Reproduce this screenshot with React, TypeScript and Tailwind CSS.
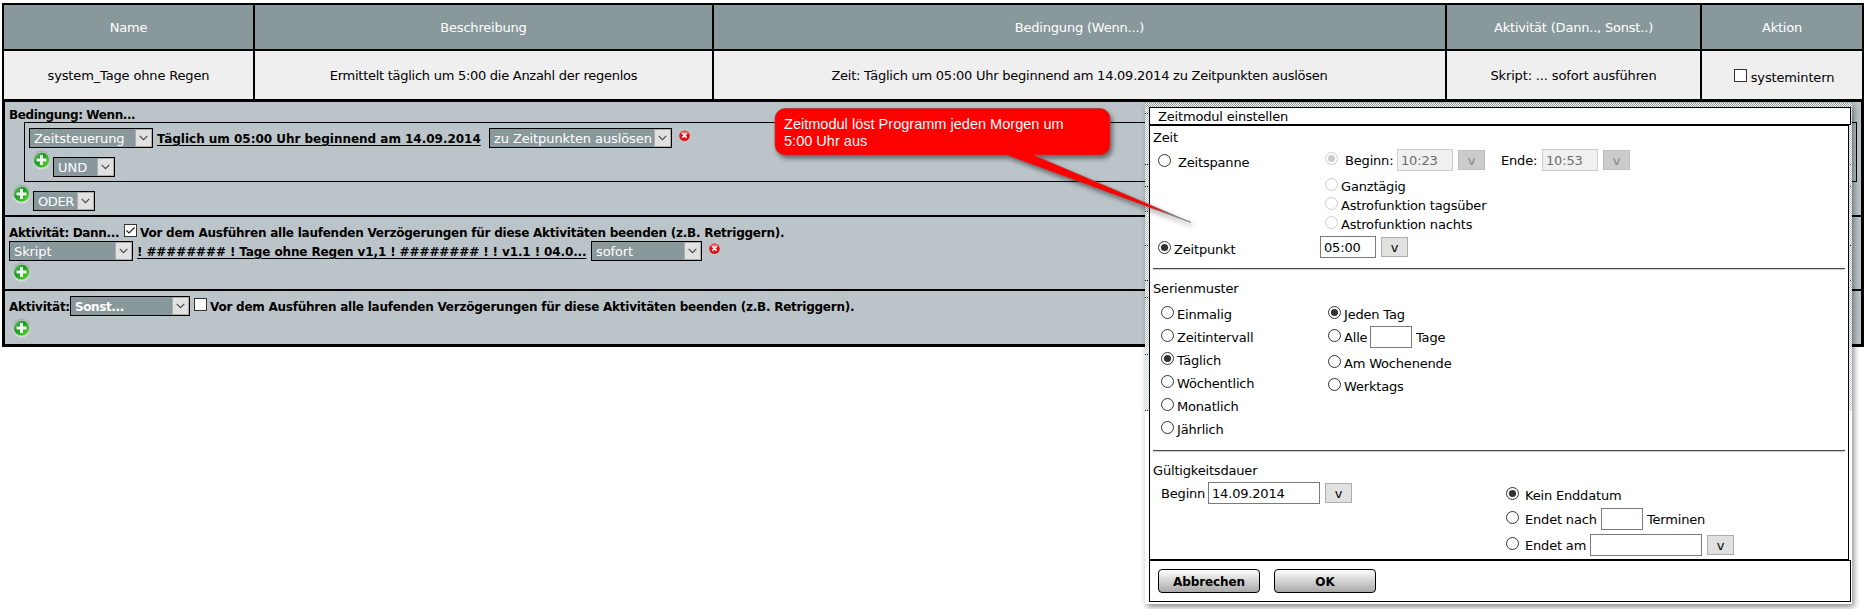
import React from "react";

type P = { className?: string; children?: React.ReactNode };

const T = ({ className = "", children }: P) => (
  <span className={`block shrink-0 whitespace-pre leading-[21px] ${className}`}>{children}</span>
);

const Line = ({ className = "", children }: P) => (
  <div className={`flex shrink-0 items-baseline ${className}`}>{children}</div>
);

function Radio({ on, off, className = "" }: { on?: boolean; off?: boolean; className?: string }) {
  const c = off ? "#cccccc" : "#333333";
  return (
    <svg className={`block shrink-0 ${className}`} width="13" height="13" viewBox="0 0 13 13">
      <circle cx="6.5" cy="6.5" r="6" fill="#fff" stroke={c} />
      {on && <circle cx="6.5" cy="6.5" r="3.6" fill={c} />}
    </svg>
  );
}

function Check({ on, className = "" }: { on?: boolean; className?: string }) {
  return (
    <svg className={`block shrink-0 ${className}`} width="13" height="13" viewBox="0 0 13 13">
      <rect x=".5" y=".5" width="12" height="12" fill="#fff" stroke="#333" />
      {on && <path d="M2.500 6.500 5 9l5.500-5.500" fill="none" stroke="#222" strokeWidth="1.2" />}
    </svg>
  );
}

function Select({ className = "font-normal text-[13px] tracking-[-0.1px]", width, children }: P & { width: string }) {
  return (
    <div className={`flex h-5 shrink-0 items-center border border-black bg-[#89989b] text-white ${width} ${className}`}>
      <span className="block flex-1 whitespace-pre pl-1 pt-[2px] leading-[18px]">{children}</span>
      <span className="flex h-[18px] w-[17px] items-center justify-center border border-[#adadad] bg-[#e1e1e1]">
        <svg width="9" height="6" viewBox="0 0 9 6">
          <path d="M.7.8 4.500 4.600 8.300.8" fill="none" stroke="#444" strokeWidth="1.1" />
        </svg>
      </span>
    </div>
  );
}

function Plus({ className = "" }: P) {
  return (
    <svg className={`block shrink-0 ${className}`} width="20" height="20" viewBox="0 0 20 20">
      <defs>
        <linearGradient id="ring" x1="0" y1="0" x2="0" y2="1">
          <stop offset="0" stopColor="#a3abae" />
          <stop offset="1" stopColor="#d9dddf" />
        </linearGradient>
        <linearGradient id="green" x1="0" y1="0" x2="1" y2="1">
          <stop offset="0" stopColor="#8cc78c" />
          <stop offset=".4" stopColor="#189a22" />
          <stop offset="1" stopColor="#5fe02c" />
        </linearGradient>
      </defs>
      <circle cx="10.500" cy="10" r="8.800" fill="#c3c9cb" stroke="url(#ring)" strokeWidth="1.2" />
      <circle cx="10.500" cy="10" r="7.600" fill="url(#green)" />
      <path d="M9 5h3v3.500h3.500v3H12V15H9v-3.500H5.500v-3H9z" fill="#eef4ee" />
    </svg>
  );
}

function Remove({ className = "" }: P) {
  return (
    <svg className={`block shrink-0 ${className}`} width="13" height="13" viewBox="0 0 13 13">
      <circle cx="6.5" cy="6.5" r="6.2" fill="#cfc3c7" />
      <circle cx="6.5" cy="6.7" r="5.3" fill="#dd1216" />
      <path d="M2.200 4.600a5 5 0 0 1 8.600 0Q6.500 6 2.200 4.600z" fill="#ee7a7c" />
      <path d="M4.400 4.400 8.600 8.600M8.600 4.400 4.400 8.600" stroke="#fff" strokeWidth="1.5" />
    </svg>
  );
}

const Field = ({ off, className = "", children }: P & { off?: boolean }) => (
  <div
    className={`h-[22px] shrink-0 border pl-[3px] leading-[21px] whitespace-pre ${
      off ? "border-[#cccccc] bg-[#f0f0f0] text-[#6d6d6d]" : "border-[#7a7a7a] bg-white text-black"
    } ${className}`}
  >
    {children || " "}
  </div>
);

const V = ({ off }: { off?: boolean }) => (
  <div
    className={`ml-[5px] h-5 w-[27px] shrink-0 border text-center leading-[19px] ${
      off ? "border-[#bfbfbf] bg-[#cccccc] text-[#838383]" : "border-[#adadad] bg-[#e1e1e1] text-black"
    }`}
  >
    v
  </div>
);

const Rule = () => (
  <div className="ml-[3px] h-[2px] w-[692px] shrink-0 border-t border-b border-t-[#4a4a4a] border-b-[#cfcfcf]" />
);

const cols = "grid grid-cols-[249px_457px_731px_253px_160px] gap-x-[2px] bg-black px-[2px] text-center";

function Callout() {
  return (
    <div className="absolute left-[765px] top-[98px] h-[140px] w-[440px]">
      <svg className="absolute inset-0" width="440" height="140" viewBox="0 0 440 140">
        <defs>
          <filter id="soft" x="-10%" y="-20%" width="120%" height="150%">
            <feDropShadow dx="2" dy="3" stdDeviation="2.5" floodColor="#000" floodOpacity=".5" />
          </filter>
          <linearGradient id="tip" gradientUnits="userSpaceOnUse" x1="385" y1="0" x2="408" y2="0">
            <stop offset="0" stopColor="#f00" />
            <stop offset="1" stopColor="#777" />
          </linearGradient>
          <linearGradient id="edge" gradientUnits="userSpaceOnUse" x1="385" y1="0" x2="408" y2="0">
            <stop offset="0" stopColor="#a33" />
            <stop offset="1" stopColor="#777" />
          </linearGradient>
        </defs>
        <g filter="url(#soft)">
          <path
            d="M20 10.500H335a10 10 0 0 1 10 10V47a10 10 0 0 1-10 10H268L426 124.500 242 57H20a10 10 0 0 1-10-10V20.500a10 10 0 0 1 10-10z"
            fill="url(#tip)"
            stroke="url(#edge)"
            strokeWidth=".7"
          />
        </g>
      </svg>
      <div className="relative whitespace-pre pl-[19px] pt-[18px] font-['Liberation_Sans',Arial,sans-serif] text-[14.5px] leading-[17px] tracking-[0.02px] text-white">
        Zeitmodul löst Programm jeden Morgen um{"\n"}5:00 Uhr aus
      </div>
    </div>
  );
}

function Dither() {
  return (
    <div className="absolute inset-0">
      <div className="h-1 bg-[repeating-conic-gradient(#ffffff_0_25%,#89989b_0_50%)] bg-[length:2px_2px]" />
      <div className="h-[240px] bg-[repeating-conic-gradient(#ffffff_0_25%,#b5bfc3_0_50%)] bg-[length:2px_2px]" />
      <div className="h-16 bg-[repeating-conic-gradient(#ffffff_0_25%,#cfd6da_0_50%)] bg-[length:2px_2px]" />
      <svg className="absolute inset-0" width="707" height="320" viewBox="0 0 707 320">
        <path
          d="M0 10.500h4M0 61.500h4M0 83.500h4M0 108.500h4M0 142.500h4M0 177.500h4M0 194.500h4M0 251.500h4M0 307.500h4M703 10.500h4M703 61.500h4M703 83.500h4M703 142.500h4M703 177.500h4"
          stroke="#222"
          strokeDasharray="1 1"
        />
      </svg>
    </div>
  );
}

function TimeDialog() {
  return (
    <div className="absolute left-[1145px] top-[103px] h-[501px] w-[707px] bg-white tracking-[-0.18px] shadow-[2px_3px_6px_rgba(0,0,0,0.45)]">
      <Dither />
      <div className="relative flex h-full flex-col pl-1 pt-1">
        <div className="h-[18px] w-[702px] shrink-0 border border-black bg-white pl-2">
          <T className="-mt-[2px]">Zeitmodul einstellen</T>
        </div>
        <div className="flex h-[435px] w-[700px] shrink-0 flex-col border border-black bg-white">
          <section className="flex h-[142px] shrink-0">
            <div className="w-[170px] pl-2">
              <T className="-ml-[5px] mt-px h-[25px]">Zeit</T>
              <Line className="h-[87px]">
                <Radio />
                <T className="ml-[7px]">Zeitspanne</T>
              </Line>
              <Line>
                <Radio on />
                <T className="ml-[3px]">Zeitpunkt</T>
              </Line>
            </div>
            <div className="pt-[23px]">
              <Line className="h-[27px] pl-[5px]">
                <Radio on off />
                <T className="ml-[7px] w-[52px]">Beginn:</T>
                <Field off className="w-14">10:23</Field>
                <V off />
                <T className="ml-4 w-[41px]">Ende:</T>
                <Field off className="w-14">10:53</Field>
                <V off />
              </Line>
              {["Ganztägig", "Astrofunktion tagsüber", "Astrofunktion nachts"].map((t) => (
                <Line key={t} className="h-[19px] pl-[5px]">
                  <Radio off />
                  <T className="ml-[3px]">{t}</T>
                </Line>
              ))}
              <Line className="mt-[3px]">
                <Field className="w-14">05:00</Field>
                <V />
              </Line>
            </div>
          </section>
          <Rule />
          <section className="h-[180px] shrink-0">
            <T className="ml-[3px] h-[26px] pt-2">Serienmuster</T>
            <div className="flex pl-[11px] pt-2">
              <div className="w-[167px]">
                {["Einmalig", "Zeitintervall", "Täglich", "Wöchentlich", "Monatlich", "Jährlich"].map((t) => (
                  <Line key={t} className="h-[23px]">
                    <Radio on={t === "Täglich"} />
                    <T className="ml-[3px]">{t}</T>
                  </Line>
                ))}
              </div>
              <div>
                <Line className="h-[22px]">
                  <Radio on />
                  <T className="ml-[3px]">Jeden Tag</T>
                </Line>
                <Line className="h-[27px]">
                  <Radio />
                  <T className="ml-[3px] w-[26px]">Alle</T>
                  <Field className="w-[42px]" />
                  <T className="ml-1">Tage</T>
                </Line>
                <Line className="h-[23px]">
                  <Radio />
                  <T className="ml-[3px]">Am Wochenende</T>
                </Line>
                <Line>
                  <Radio />
                  <T className="ml-[3px]">Werktags</T>
                </Line>
              </div>
            </div>
          </section>
          <Rule />
          <section className="flex h-[107px] shrink-0">
            <div className="w-[356px] pl-[11px] pt-2">
              <T className="-ml-2 h-[22px]">Gültigkeitsdauer</T>
              <Line>
                <T className="w-[47px]">Beginn</T>
                <Field className="w-28">14.09.2014</Field>
                <V />
              </Line>
            </div>
            <div className="pt-[33px]">
              <Line className="h-[23px]">
                <Radio on />
                <T className="ml-[6px]">Kein Enddatum</T>
              </Line>
              <Line className="h-[26px]">
                <Radio />
                <T className="ml-[6px] w-[76px]">Endet nach</T>
                <Field className="w-[42px]" />
                <T className="ml-1">Terminen</T>
              </Line>
              <Line>
                <Radio />
                <T className="ml-[6px] w-[65px]">Endet am</T>
                <Field className="w-28" />
                <V />
              </Line>
            </div>
          </section>
        </div>
        <div className="flex h-[42px] w-[702px] shrink-0 gap-[14px] border border-black bg-white pl-2 pt-2 text-[12px] font-bold tracking-[-0.1px]">
          {["Abbrechen", "OK"].map((t) => (
            <div
              key={t}
              className="h-6 w-[102px] rounded-[4px] border border-black bg-linear-to-b from-white to-[#a9a9a9] text-center leading-[25px]"
            >
              {t}
            </div>
          ))}
        </div>
      </div>
    </div>
  );
}

export default function App() {
  const note = "Vor dem Ausführen alle laufenden Verzögerungen für diese Aktivitäten beenden (z.B. Retriggern).";
  return (
    <div className="relative h-[609px] w-[1867px] overflow-hidden bg-white pl-[2px] pt-[3px] font-['DejaVu_Sans',Verdana,sans-serif] text-[13px] text-black">
      <div className="w-[1862px]">
        <div className={`${cols} pt-[2px] leading-[46px] tracking-[-0.2px] text-white *:h-11 *:bg-[#89989b]`}>
          <div>Name</div>
          <div>Beschreibung</div>
          <div>Bedingung (Wenn...)</div>
          <div>Aktivität (Dann.., Sonst..)</div>
          <div>Aktion</div>
        </div>
        <div className={`${cols} pt-[2px] leading-[50px] tracking-[-0.15px] *:h-12 *:bg-[#efefef]`}>
          <div>system_Tage ohne Regen</div>
          <div className="tracking-[-0.27px]">Ermittelt täglich um 5:00 die Anzahl der regenlos</div>
          <div className="tracking-[-0.24px]">Zeit: Täglich um 05:00 Uhr beginnend am 14.09.2014 zu Zeitpunkten auslösen</div>
          <div>Skript: ... sofort ausführen</div>
          <div className="flex items-baseline justify-center gap-1 pl-1 pt-[2px]">
            <Check />
            <span>systemintern</span>
          </div>
        </div>
        <div className="border-[3px] border-black bg-[#bbc5c9] text-[12px] font-bold">
          <div className="h-[113px] pl-1">
            <T className="h-5 pt-[3px] tracking-[-0.4px]">Bedingung: Wenn...</T>
            <div className="ml-[15px] h-[60px] w-[1833px] border border-black pl-1 pt-[5px]">
              <div className="flex h-[28px]">
                <Select width="w-[124px]">Zeitsteuerung</Select>
                <T className="ml-1 mt-px w-[332px] tracking-[-0.02px] underline underline-offset-2">
                  Täglich um 05:00 Uhr beginnend am 14.09.2014
                </T>
                <Select width="w-[183px]">zu Zeitpunkten auslösen</Select>
                <Remove className="ml-[6px] mt-px" />
              </div>
              <div className="flex">
                <Plus className="-mt-[6px] ml-[2px]" />
                <Select width="w-[62px]" className="ml-[2px] mt-px font-normal text-[13px]">UND</Select>
              </div>
            </div>
            <div className="flex pl-[2px] pt-[2px]">
              <Plus />
              <Select width="w-[62px]" className="ml-[2px] mt-[7px] font-normal text-[13px] tracking-[-0.4px]">ODER</Select>
            </div>
          </div>
          <div className="h-[74px] border-t-2 border-black pl-1">
            <Line className="h-6 pt-[6px]">
              <T className="w-[115px] tracking-[-0.35px]">Aktivität: Dann...</T>
              <Check on />
              <T className="ml-[3px] tracking-[-0.235px]">{note}</T>
            </Line>
            <div className="flex">
              <Select width="w-[124px]">Skript</Select>
              <T className="ml-1 mt-px w-[454px] tracking-[-0.12px] underline underline-offset-2">
                ! ######## ! Tage ohne Regen v1,1 ! ######## ! ! v1.1 ! 04.0...
              </T>
              <Select width="w-[111px]">sofort</Select>
              <Remove className="ml-[6px] mt-px" />
            </div>
            <Plus className="-mt-px ml-[2px]" />
          </div>
          <div className="h-[55px] border-t-2 border-black pl-1">
            <div className="flex pt-[5px]">
              <T className="mt-px w-[61px] tracking-[-0.25px]">Aktivität:</T>
              <Select width="w-[120px]" className="tracking-[-0.4px]">Sonst...</Select>
              <Check className="ml-1 mt-[2px]" />
              <T className="ml-[3px] mt-px tracking-[-0.235px]">{note}</T>
            </div>
            <Plus className="ml-[2px]" />
          </div>
        </div>
      </div>
      <TimeDialog />
      <Callout />
    </div>
  );
}
